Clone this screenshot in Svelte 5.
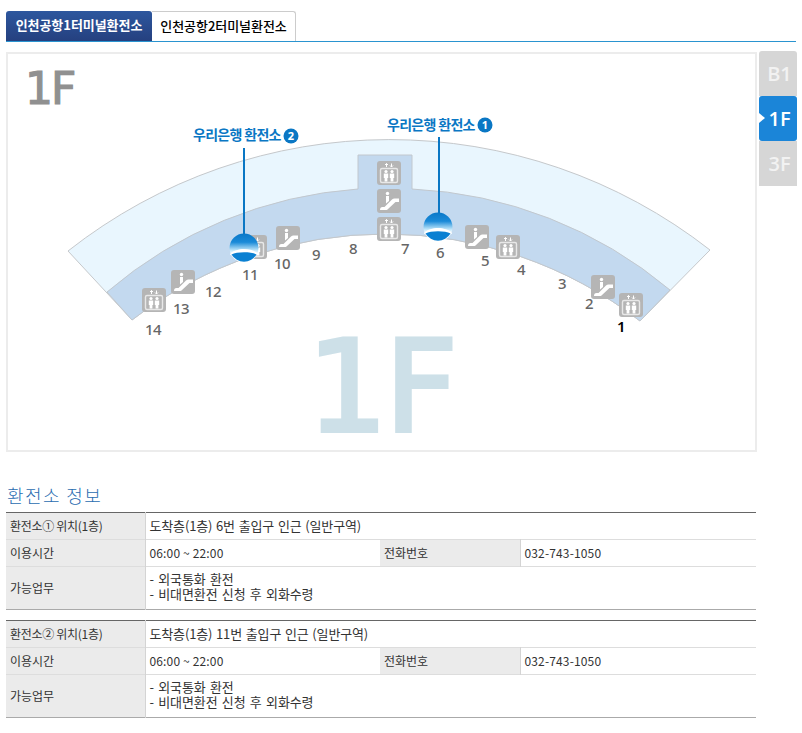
<script>
  const elevators = [[154, 300], [255, 247], [389, 173], [389, 229], [508, 247], [631, 305]];
  const escalators = [[183, 282], [288, 238], [389, 201], [477, 237], [603, 287]];
  const gates = [
    [14, 153, 330], [13, 181, 309], [12, 213, 292], [11, 250, 275], [10, 282, 264],
    [9, 316, 255], [8, 353, 249], [7, 405, 249], [6, 440, 253], [5, 485, 261],
    [4, 521, 270], [3, 562, 284], [2, 589, 304], [1, 621, 327]
  ];
  const offices = [
    { label: "환전소① 위치(1층)", place: "도착층(1층) 6번 출입구 인근 (일반구역)" },
    { label: "환전소② 위치(1층)", place: "도착층(1층) 11번 출입구 인근 (일반구역)" }
  ];
</script>

{#snippet elevator(x, y)}
  <g transform="translate({x - 12} {y - 12})">
    <rect width="24" height="24" rx="3" fill="#b5b5b5" />
    <rect x="3.5" y="7.5" width="17" height="14" rx="1.5" fill="none" stroke="#e8e8e8" stroke-width="1.4" />
    <circle cx="9" cy="10.5" r="1.6" fill="#fff" />
    <circle cx="15" cy="10.5" r="1.6" fill="#fff" />
    <path d="M6.800 12.500h4.400v4.500h-.8v3.500H7.600V17h-.8zM12.800 12.500h4.400v4.500h-.8v3.500h-2.800V17h-.8z" fill="#fff" />
    <path d="M9.500 6V2.500M8 4l1.500-1.500L11 4M14.500 2.500V6M13 4.500L14.500 6 16 4.500" fill="none" stroke="#fff" stroke-width="1" />
  </g>
{/snippet}

{#snippet escalator(x, y)}
  <g transform="translate({x - 12} {y - 12})">
    <rect width="24" height="24" rx="3" fill="#b5b5b5" />
    <circle cx="10.5" cy="4.5" r="1.7" fill="#fff" />
    <path d="M9 7h3v5l-3 2.500z" fill="#fff" />
    <path d="M3 21c0-2 .8-3 2.500-3h2L15 10.500c.7-.7 1.500-1 2.500-1H22v3.500h-3.500L10.500 20.500c-.6.500-1 .5-2 .5z" fill="#fff" />
  </g>
{/snippet}

{#snippet marker(x, y)}
  <g transform="translate({x} {y})">
    <circle r="14.500" fill="url(#dome)" />
    <path d="M-13.500 5.500C-8 -.5 8 -.5 13.500 5.500L14 7H-14z" fill="#fff" />
    <path d="M-12.500 6.500C-7 3.500 7 3.500 12.500 6.500A14.500 14.500 0 0 1 -12.500 6.500z" fill="#0a80d2" />
  </g>
{/snippet}

<div class="page">
  <ul class="tabs">
    <li class="tab active">인천공항1터미널환전소</li>
    <li class="tab">인천공항2터미널환전소</li>
  </ul>

  <div class="map-row">
    <div class="map">
      <svg viewBox="8 54 747 396" width="747" height="396">
        <defs>
          <linearGradient id="dome" x1="0" y1="0" x2="0" y2="1">
            <stop offset="0" stop-color="#0a78c8" />
            <stop offset="0.3" stop-color="#1a8ad8" />
            <stop offset="0.58" stop-color="#bfe6fa" />
            <stop offset="0.7" stop-color="#fff" />
          </linearGradient>
        </defs>

        <path class="outer" d="M68 251A520 520 0 0 1 710 250L640 321A416 416 0 0 0 132 320z" />
        <path class="inner" d="M107 292A433 433 0 0 1 358 189V155H412V189A433 433 0 0 1 670 290L640 321A416 416 0 0 0 132 320z" />

        <text class="watermark" x="307" y="431">1F</text>
        <text class="floor-name" x="25" y="104">1F</text>

        {#each elevators as [x, y]}
          {@render elevator(x, y)}
        {/each}
        {#each escalators as [x, y]}
          {@render escalator(x, y)}
        {/each}
        {#each gates as [n, x, y]}
          <text class="gate" class:current={n === 1} {x} y={y + 5}>{n}</text>
        {/each}

        <line class="pin" x1="244" y1="148" x2="244" y2="236" />
        <line class="pin" x1="439" y1="137" x2="439" y2="214" />
        {@render marker(244, 248)}
        {@render marker(438, 227)}

        <text class="bank" x="193" y="140">우리은행 환전소</text>
        <circle cx="291" cy="136" r="7.500" fill="#0a77c4" />
        <text class="bank-no" x="291" y="140">2</text>
        <text class="bank" x="387" y="130">우리은행 환전소</text>
        <circle cx="485" cy="125" r="7.500" fill="#0a77c4" />
        <text class="bank-no" x="485" y="129">1</text>
      </svg>
    </div>

    <ul class="floors">
      <li>B1</li>
      <li class="on">1F</li>
      <li>3F</li>
    </ul>
  </div>

  <h2>환전소 정보</h2>

  {#each offices as office}
    <table>
      <colgroup>
        <col class="c1" />
        <col class="c2" />
        <col class="c3" />
        <col />
      </colgroup>
      <tbody>
        <tr>
          <th class="tight">{office.label}</th>
          <td colspan="3" class="place">{office.place}</td>
        </tr>
        <tr>
          <th>이용시간</th>
          <td class="num">06:00 ~ 22:00</td>
          <th>전화번호</th>
          <td class="num">032-743-1050</td>
        </tr>
        <tr class="tall">
          <th>가능업무</th>
          <td colspan="3">- 외국통화 환전<br />- 비대면환전 신청 후 외화수령</td>
        </tr>
      </tbody>
    </table>
  {/each}
</div>

<style>
  :global(body) {
    background: #fff;
  }

  .page {
    width: 790px;
    padding: 11px 0 0 6px;
    font-family: "Noto Sans CJK KR", "Noto Sans", sans-serif;
    font-size: 12px;
    color: #333;
  }

  .tabs {
    display: flex;
    margin: 0;
    padding: 0;
    height: 30px;
    list-style: none;
    border-bottom: 1px solid #2a94d0;
  }

  .tab {
    width: 144px;
    line-height: 28px;
    text-align: center;
    font-size: 13px;
    font-weight: 500;
    letter-spacing: -0.05px;
    color: #000;
    background: #fff;
    border: 1px solid #ccc;
    border-bottom: 0;
    border-left: 0;
    border-radius: 0 3px 0 0;
    box-sizing: border-box;
    height: 30px;
  }

  .tab.active {
    width: 146px;
    line-height: 27px;
    font-weight: 700;
    color: #fff;
    border: 0;
    border-radius: 3px 3px 0 0;
    background: linear-gradient(#2d579e, #25407f);
  }

  .map-row {
    display: flex;
    align-items: flex-start;
    margin-top: 10px;
  }

  .map {
    width: 747px;
    height: 396px;
    border: 2px solid #ececec;
    flex: none;
  }

  .map svg {
    display: block;
  }

  .outer {
    fill: #e9f6fe;
    stroke: #c5c8cb;
    stroke-width: 1;
  }

  .inner {
    fill: #c3d9ef;
    stroke: #c2c8ce;
    stroke-width: 1;
  }

  .watermark,
  .floor-name {
    font-family: "DejaVu Sans", sans-serif;
  }

  .watermark {
    font-size: 127px;
    letter-spacing: -3px;
    fill: #cde0e8;
    stroke: #cde0e8;
    stroke-width: 4;
  }

  .floor-name {
    font-size: 44px;
    letter-spacing: -2px;
    fill: #909090;
    stroke: #909090;
    stroke-width: 1.2;
  }

  .gate {
    font-family: "Noto Sans", sans-serif;
    font-size: 15px;
    font-weight: 500;
    letter-spacing: -0.5px;
    text-anchor: middle;
    fill: #666;
  }

  .gate.current {
    fill: #000;
    font-weight: 600;
  }

  .pin {
    stroke: #0a77c4;
    stroke-width: 2;
  }

  .bank {
    font-size: 14px;
    font-weight: 700;
    letter-spacing: -0.7px;
    fill: #0a77c4;
  }

  .bank-no {
    font-family: "Noto Sans", sans-serif;
    font-size: 11px;
    font-weight: 700;
    text-anchor: middle;
    fill: #fff;
  }

  .floors {
    flex: none;
    width: 38px;
    margin: -1px 0 0 2px;
    padding: 0;
    list-style: none;
  }

  .floors li {
    height: 45px;
    line-height: 45px;
    padding-left: 3px;
    box-sizing: border-box;
    text-align: center;
    font-family: "Open Sans", sans-serif;
    font-size: 20px;
    font-weight: 600;
    color: #f2f2f2;
    background: #d6d6d6;
  }

  .floors li:first-child {
    border-radius: 3px 3px 0 0;
  }

  .floors li.on {
    position: relative;
    color: #fff;
    background: #1b85d8;
    border-radius: 3px;
  }

  .floors li.on::before {
    content: "";
    position: absolute;
    left: 0;
    top: 17px;
    border-style: solid;
    border-width: 5px 0 5px 6px;
    border-color: transparent transparent transparent #fff;
  }

  h2 {
    margin: 31px 0 0 1px;
    height: 29px;
    font-size: 18px;
    line-height: 24px;
    font-weight: 300;
    letter-spacing: 1.4px;
    color: #2a6cb0;
  }

  table {
    width: 750px;
    margin-bottom: 10px;
    table-layout: fixed;
    border-collapse: collapse;
    border-top: 1px solid #666;
    border-bottom: 1px solid #aaa;
  }

  .c1 {
    width: 139px;
  }

  .c2 {
    width: 235px;
  }

  .c3 {
    width: 140px;
  }

  tr {
    height: 27px;
  }

  tr.tall {
    height: 43px;
  }

  tr + tr {
    border-top: 1px solid #ddd;
  }

  th,
  td {
    padding: 0 0 2px 4px;
    font-size: 13px;
    line-height: 15px;
    text-align: left;
    font-weight: 400;
    letter-spacing: -0.1px;
    word-spacing: 1.500px;
  }

  tr.tall td {
    padding-bottom: 4px;
  }

  th {
    font-size: 12px;
    letter-spacing: 0;
    word-spacing: 0;
    background: #ebebeb;
    border-right: 1px solid #d4d4d4;
    color: #333;
  }

  th.tight {
    letter-spacing: -0.3px;
  }

  td.place {
    letter-spacing: -0.15px;
    word-spacing: 1px;
  }

  td.num {
    font-size: 12px;
    letter-spacing: 0.15px;
    word-spacing: 0;
  }
</style>
